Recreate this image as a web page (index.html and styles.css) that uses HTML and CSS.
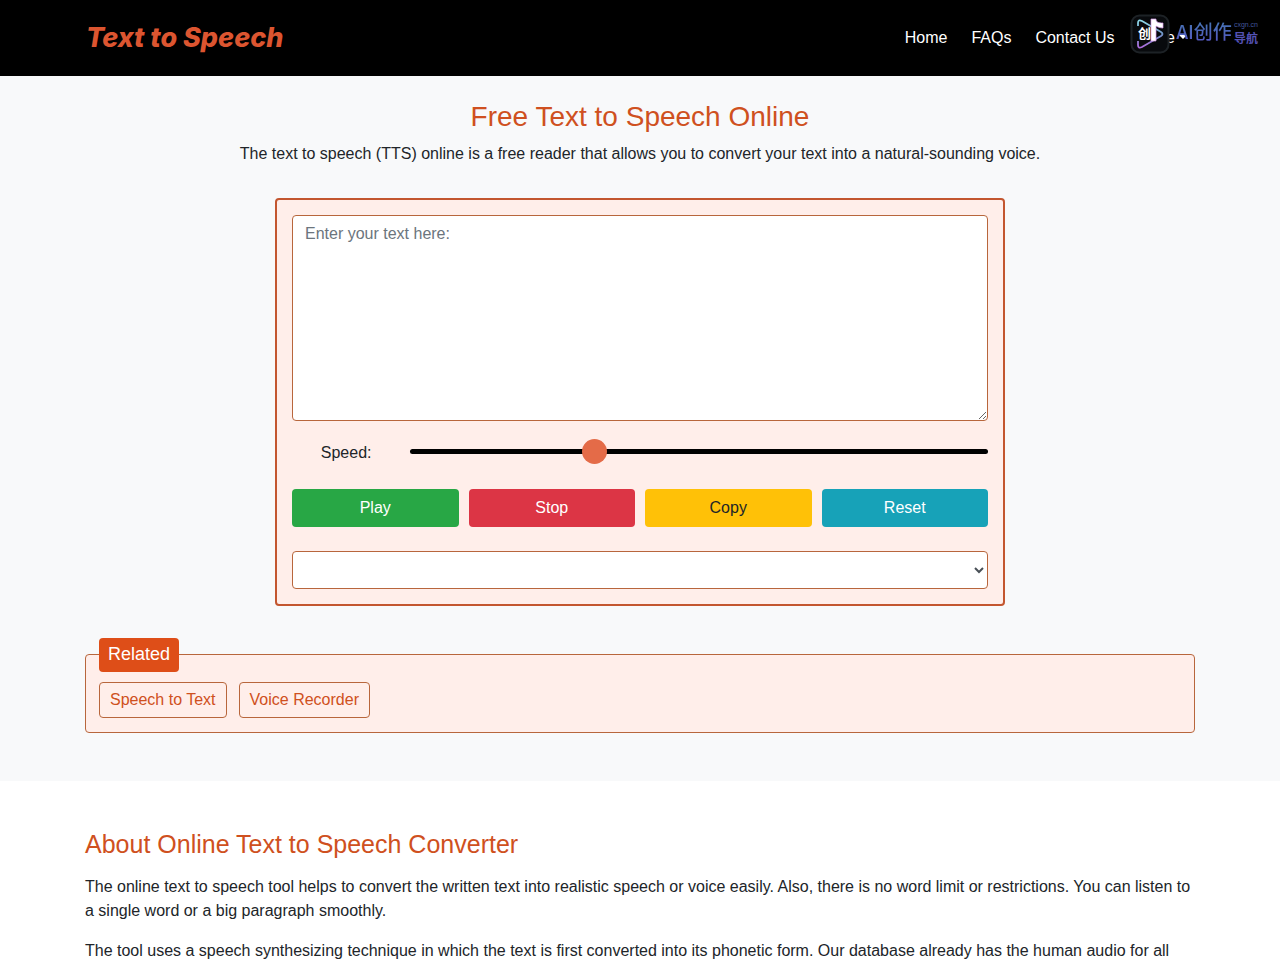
FILE: index.html
```html
<!DOCTYPE html>
<html lang="en">
<head>
<meta charset="utf-8">
<meta name="viewport" content="width=device-width, initial-scale=1">
<title>Text to Speech</title>
<link rel="stylesheet" href="styles.css">
</head>
<body>
<header class="header">
  <div class="container header-row">
    <a class="brand" href="#">Text to Speech</a>
    <nav class="nav">
      <a href="#">Home</a>
      <a href="#">FAQs</a>
      <a href="#">Contact Us</a>
      <a class="dropdown" href="#">More</a>
    </nav>
  </div>
  <div class="watermark">
    <svg class="watermark-icon" viewBox="0 0 40 40" aria-hidden="true">
      <defs>
        <linearGradient id="edge" x1="0" y1="0" x2="0" y2="1">
          <stop offset="0" stop-color="#8fdcea"/>
          <stop offset=".5" stop-color="#7095c8"/>
          <stop offset="1" stop-color="#b06be0"/>
        </linearGradient>
      </defs>
      <rect x="1.5" y="1.5" width="37" height="37" rx="8" fill="#080a0d" stroke="#1d2226" stroke-width="2"/>
      <path d="M8 12V9q0-4 4-2l19 11q3 2 0 4L12 33q-4 2-4-2v-4" fill="none" stroke="url(#edge)" stroke-width="1.8"/>
      <path d="M21 27V5h5c0 3 2 4 7 4v5c-3 0-5-1-7-2v15z" fill="#fff" stroke="#d79bea" stroke-width=".7"/>
      <text class="watermark-glyph" x="8" y="24">创</text>
    </svg>
    <span class="watermark-name">AI创作</span>
    <span class="watermark-side"><small>cxgn.cn</small><b>导航</b></span>
  </div>
</header>
<main>
  <section class="tool">
    <div class="container">
      <h1>Free Text to Speech Online</h1>
      <p class="lead">The text to speech (TTS) online is a free reader that allows you to convert your text into a natural-sounding voice.</p>
      <form class="panel">
        <textarea class="field text" aria-label="Text" placeholder="Enter your text here:"></textarea>
        <div class="speed">
          <label for="speed">Speed:</label>
          <input id="speed" class="slider" type="range" min="0" max="100" value="31">
        </div>
        <div class="actions">
          <button class="btn play" type="button">Play</button>
          <button class="btn stop" type="button">Stop</button>
          <button class="btn copy" type="button">Copy</button>
          <button class="btn reset" type="button">Reset</button>
        </div>
        <select class="field voice" aria-label="Voice"></select>
      </form>
      <aside class="related">
        <h2 class="related-title">Related</h2>
        <div class="related-links">
          <a href="#">Speech to Text</a>
          <a href="#">Voice Recorder</a>
        </div>
      </aside>
    </div>
  </section>
  <section class="about container">
    <h2>About Online Text to Speech Converter</h2>
    <p>The online text to speech tool helps to convert the written text into realistic speech or voice easily. Also, there is no word limit or restrictions. You can listen to a single word or a big paragraph smoothly.</p>
    <p>The tool uses a speech synthesizing technique in which the text is first converted into its phonetic form. Our database already has the human audio for all</p>
  </section>
</main>
</body>
</html>
```

FILE: styles.css
```css
* { box-sizing: border-box; }

body {
  margin: 0;
  background: #fff;
  color: #212529;
  font: 16px/24px "Liberation Sans", Arial, sans-serif;
}

h1, h2, p { margin: 0; }
h1, h2 { color: #cf5020; font-weight: 400; }
a { text-decoration: none; }

.container {
  width: 100%;
  max-width: 1140px;
  margin: 0 auto;
  padding: 0 15px;
}

.header { position: relative; background: #000; }

.header-row {
  display: flex;
  align-items: center;
  justify-content: space-between;
  min-height: 76px;
}

.brand {
  padding-left: 1px;
  color: #dc5530;
  font: italic 800 27px/36px Inter, sans-serif;
}

.nav { display: flex; gap: 24px; padding-right: 8px; }
.nav a { color: #fff; }

.dropdown::after {
  content: "";
  display: inline-block;
  margin-left: 4px;
  vertical-align: 4px;
  border-top: 4px solid;
  border-left: 4px solid transparent;
  border-right: 4px solid transparent;
}

.watermark {
  position: absolute;
  top: 14px;
  right: 22px;
  display: flex;
  align-items: flex-start;
  color: #5260b8;
  font-family: "Noto Sans CJK SC", sans-serif;
}

.watermark-icon { width: 40px; height: 40px; margin-right: 6px; }
.watermark-glyph { fill: #fff; font: 700 13px "Noto Sans CJK SC", sans-serif; }

.watermark-name {
  background: linear-gradient(#3f7fae, #5a4ec4);
  background-clip: text;
  color: transparent;
  font-size: 19px;
  font-weight: 500;
  line-height: 34px;
}

.watermark-side { display: flex; flex-direction: column; margin: 7px 0 0 2px; }
.watermark-side small { font: 7px/8px "Liberation Sans", sans-serif; color: #40569c; }
.watermark-side b { font-size: 12px; line-height: 17px; color: #5452b4; }

.tool { padding: 24px 0 48px; background: #f8f9fa; }
.tool h1 { font-size: 28px; line-height: 34px; text-align: center; }
.lead { margin: 8px 0 32px; text-align: center; }

.panel {
  max-width: 730px;
  margin: 0 auto 48px;
  padding: 15px;
  border: 2px solid #c3562f;
  border-radius: 4px;
  background: #ffeeea;
}

.field {
  display: block;
  width: 100%;
  border: 1px solid #b8663c;
  border-radius: 4px;
  background: #fff;
  color: #495057;
  font: inherit;
}

.text { height: 206px; padding: 6px 12px; resize: vertical; }
.text::placeholder { color: #6c757d; }
.voice { height: 38px; }

.speed {
  display: flex;
  align-items: center;
  margin: 16px 0 24px;
}

.speed label { flex: 0 0 17%; padding: 4px 10px 0 0; text-align: center; }

.slider {
  flex: 1;
  min-width: 0;
  height: 5px;
  margin: 0;
  border-radius: 5px;
  background: #000;
  appearance: none;
}

.slider::-webkit-slider-thumb {
  width: 25px;
  height: 25px;
  border-radius: 50%;
  background: #e46b48;
  appearance: none;
}

.actions {
  display: grid;
  grid-template-columns: repeat(4, 1fr);
  gap: 10px;
  margin-bottom: 24px;
}

.btn {
  padding: 7px 12px;
  border: 0;
  border-radius: 4px;
  color: #fff;
  font: inherit;
}

.play { background: #28a745; }
.stop { background: #dc3545; }
.copy { background: #ffc107; color: #212529; }
.reset { background: #17a2b8; }

.related {
  padding: 0 13px 14px;
  border: 1px solid #b8663c;
  border-radius: 4px;
  background: #ffeeea;
}

.tool .related-title {
  width: fit-content;
  margin: -17px 0 10px;
  padding: 4px 9px 6px;
  border-radius: 4px;
  background: #de4e18;
  color: #fff;
  font-size: 18px;
  line-height: 24px;
}

.related-links { display: flex; flex-wrap: wrap; gap: 12px; }

.related-links a {
  padding: 5px 10px;
  border: 1px solid #b8663c;
  border-radius: 4px;
  color: #cf5020;
}

.about { padding-top: 48px; }
.about h2 { margin-bottom: 16px; font-size: 25px; line-height: 30px; }
.about p { margin-bottom: 16px; }
```
